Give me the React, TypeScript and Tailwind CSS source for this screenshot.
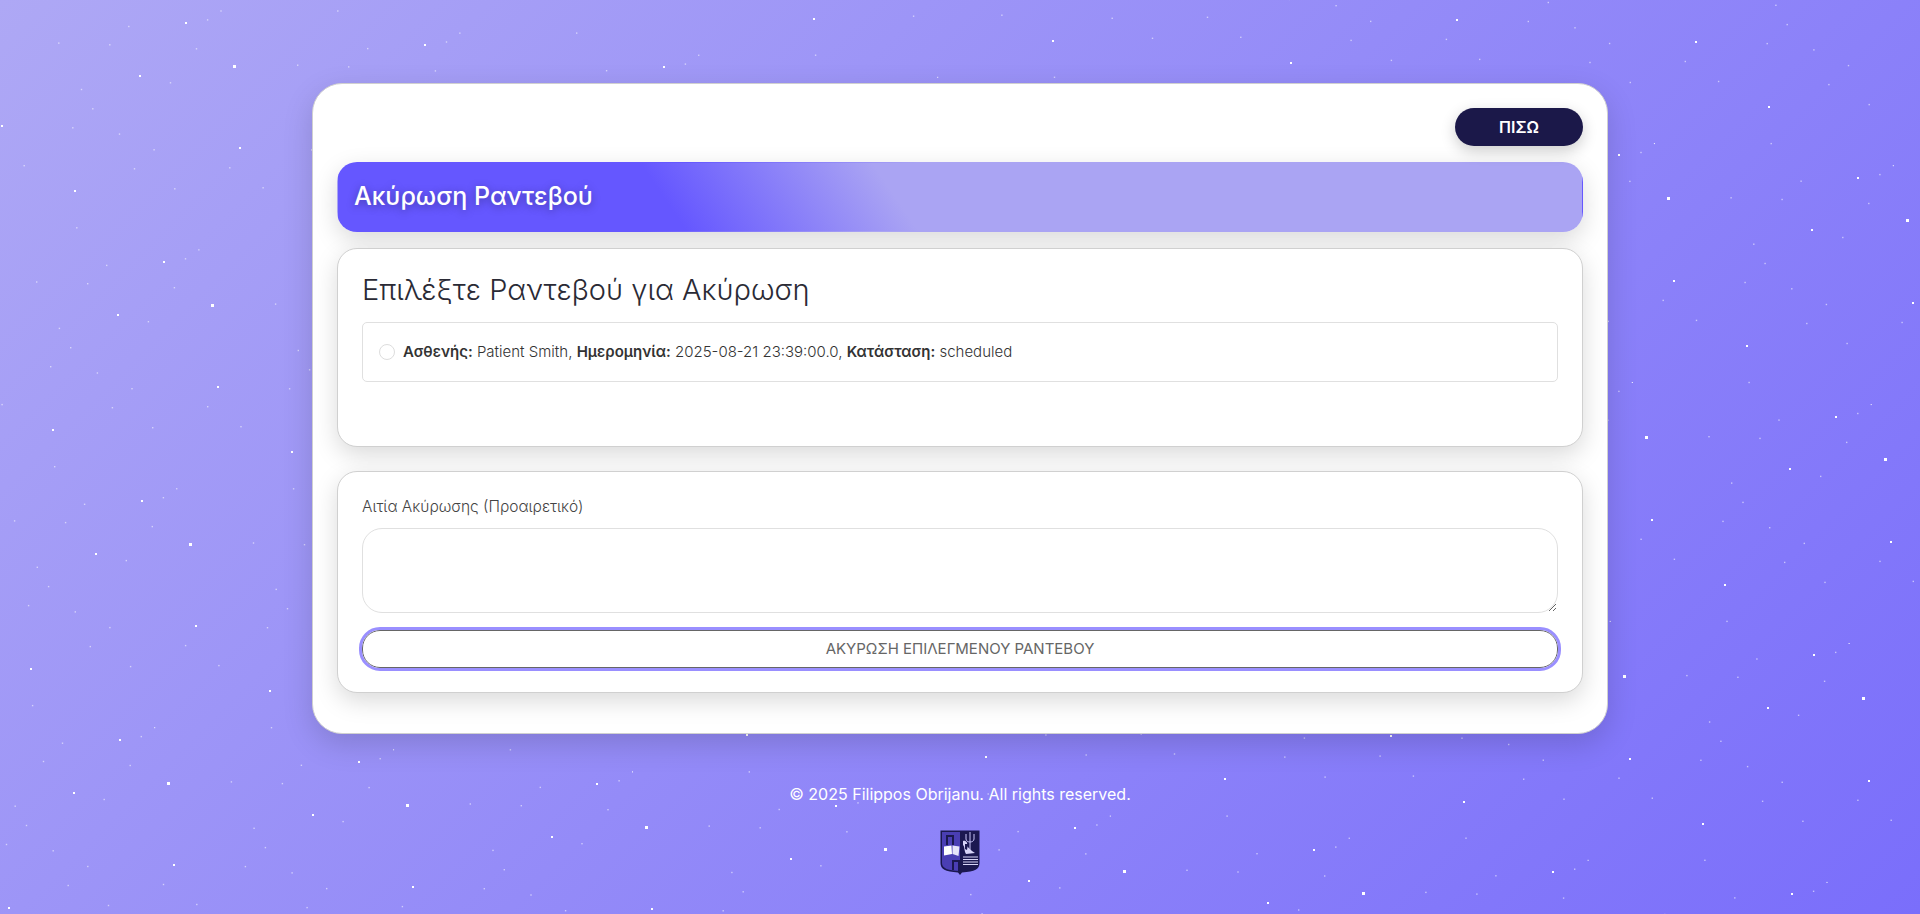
// Star field repeats on a slightly rotated lattice, so one tile is enough.
const TILE: [number, number, number][] = [
  [211.3, 303.7, 3],
  [117, 313.7, 2],
  [217.3, 386, 2],
  [51.7, 429, 2],
  [140.7, 499.7, 2],
  [176.3, 488.3, 1],
  [54, 466, 0],
  [162.7, 497, 0],
  [106, 264.7, 0],
  [36, 281.3, 0],
  [87, 283, 0],
  [173.7, 287, 0],
  [147.7, 321, 0],
  [58.7, 327.7, 0],
  [70, 347, 0],
  [50, 366, 0],
  [96.7, 372.3, 0],
  [131.3, 388, 0],
  [111.7, 407, 0],
  [207, 406, 0],
  [152, 427, 0],
  [240.3, 426, 0],
];

const STARS = (() => {
  const out: { x: number; y: number; kind: number }[] = [];
  for (let a = -2; a < 10; a++) {
    for (let b = -3; b < 5; b++) {
      for (const [x, y, kind] of TILE) {
        const px = x + a * 238.9 - b * 22.1;
        const py = y + a * 22.1 + b * 238.9;
        if (px > -4 && px < 1924 && py > -4 && py < 918) out.push({ x: px, y: py, kind });
      }
    }
  }
  return out;
})();

function Stars() {
  return (
    <svg className="absolute inset-0 h-full w-full" aria-hidden="true">
      {STARS.map((s, i) =>
        s.kind >= 2 ? (
          <rect
            key={i}
            x={Math.round(s.x)}
            y={Math.round(s.y)}
            width={s.kind}
            height={s.kind}
            fill="#fff"
          />
        ) : (
          <rect
            key={i}
            x={s.x}
            y={s.y}
            width={s.kind === 1 ? 1 : 1.4}
            height={s.kind === 1 ? 1 : 1.4}
            fill="#fff"
            opacity={s.kind === 1 ? 1 : 0.55}
          />
        ),
      )}
    </svg>
  );
}

function Crest() {
  return (
    <svg width="40" height="46" viewBox="0 0 40 46" aria-label="Crest">
      <path d="M0.5 0.5H39.5V33C39.5 39 35 41.5 22 42.5L20 45L18 42.5C5 41.5 0.5 39 0.5 33Z" fill="#1b1850" />
      <path d="M2 2H20V41C8 40.5 2 38.5 2 33Z" fill="#4a3eb4" />
      <path d="M6 5H14V15H12V7H8V15H6Z" fill="#1b1850" />
      <path d="M12 30H20V41H18V32H14V40H12Z" fill="#1b1850" />
      <path d="M4 16.5L11.5 15.5L12 24L4 25.5Z" fill="#fff" />
      <path d="M12.5 15.5L19.5 16.5L18.5 26L12.5 24Z" fill="#e6e4fa" />
      <path
        d="M30 2V20M26 4V9C26 11 28 12 30 12C32 12 34 11 34 9V4"
        stroke="#c9c5f7"
        strokeWidth="1"
        fill="none"
      />
      <path d="M23 11C26 10 28 13 27 16C29 18 31 21 35 23L26 24C24 21 25 17 23 15Z" fill="#d8d5f8" />
      <path d="M25 14L28 14L27 20L25 19Z" fill="#1b1850" />
      <path
        d="M23 27H38M23 29.5H38M23 32H38M23 34.5H38"
        stroke="#d8d5f8"
        strokeWidth="1"
        fill="none"
      />
    </svg>
  );
}

export default function App() {
  return (
    <div className="relative min-h-[914px] overflow-hidden bg-[linear-gradient(135deg,#aea8f5_0%,#7a6efb_100%)] font-['Inter','Noto_Sans',sans-serif]">
      <Stars />
      <div className="relative flex flex-col items-center pt-[83px]">
        <main className="w-[1296px] rounded-[30px] border border-[#d0d0d0] bg-white px-6 pt-6 pb-10 shadow-[0_10px_30px_rgba(0,0,0,0.15)]">
          <div className="flex justify-end">
            <button
              type="button"
              className="h-[38px] w-[128px] rounded-[20px] bg-[#1b1849] text-[16px] font-semibold text-white shadow-[0_5px_15px_rgba(0,0,0,0.2)]"
            >
              ΠΙΣΩ
            </button>
          </div>

          <h2 className="mt-4 flex h-[70px] items-center rounded-[20px] border border-transparent bg-[linear-gradient(56deg,#6557ff_27%,#aaa4f3_45%)] pl-[16px] text-[25px] font-medium text-white shadow-[0_8px_25px_rgba(0,0,0,0.15)] [text-shadow:0_2px_8px_rgba(0,0,0,0.35)]">
            Ακύρωση Ραντεβού
          </h2>

          <section className="mt-4 h-[199px] rounded-[20px] border border-[#d0d0d0] bg-white px-6 pt-[23px] shadow-[0_8px_25px_rgba(0,0,0,0.15)]">
            <h3 className="text-[29px] leading-[35px] font-light text-[#2a2a35]">
              Επιλέξτε Ραντεβού για Ακύρωση
            </h3>
            <label className="mt-[15px] flex h-[60px] items-center rounded-[5px] border border-[#e0e0e0] pl-4 text-[15px] font-light text-[#333]">
              <input
                type="radio"
                name="appointment"
                className="h-4 w-4 appearance-none rounded-full border border-[#ddd] bg-white"
              />
              <span className="ml-2">
                <strong className="font-semibold">Ασθενής:</strong> Patient Smith,{" "}
                <strong className="font-semibold">Ημερομηνία:</strong> 2025-08-21 23:39:00.0,{" "}
                <strong className="font-semibold">Κατάσταση:</strong> scheduled
              </span>
            </label>
          </section>

          <section className="mt-[24px] rounded-[20px] border border-[#d0d0d0] bg-white px-6 pt-6 pb-6 shadow-[0_8px_25px_rgba(0,0,0,0.15)]">
            <label htmlFor="reason" className="block text-[15.5px] leading-[22px] font-light text-[#444]">
              Αιτία Ακύρωσης (Προαιρετικό)
            </label>
            <textarea
              id="reason"
              className="mt-[10px] block h-[85px] w-full rounded-[20px] border border-[#e0e0e0] bg-white"
            />
            <button
              type="button"
              className="mt-[17px] block h-[38px] w-full rounded-[18px] border border-[#666] bg-white text-[15px] text-[#666] outline-[3px] outline-[#9a8fff]"
            >
              ΑΚΥΡΩΣΗ ΕΠΙΛΕΓΜΕΝΟΥ ΡΑΝΤΕΒΟΥ
            </button>
          </section>
        </main>

        <p className="mt-[50px] text-[16px] leading-5 text-white">
          © 2025 Filippos Obrijanu. All rights reserved.
        </p>
        <div className="mt-[26px] flex">
          <Crest />
        </div>
      </div>
    </div>
  );
}
